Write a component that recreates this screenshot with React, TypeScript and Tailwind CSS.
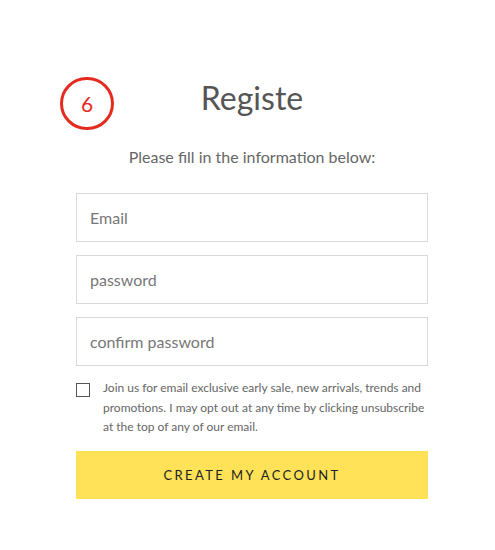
import React, { useState } from 'react';

const App: React.FC = () => {
  const [email, setEmail] = useState('');
  const [password, setPassword] = useState('');
  const [confirm, setConfirm] = useState('');
  const [subscribe, setSubscribe] = useState(false);

  return (
    <div className="min-h-[550px] w-full bg-white font-['Lato',sans-serif]">
      <div className="relative ml-[76px] w-[352px] pt-[76px]">
        {/* step marker */}
        <div className="absolute left-[-16px] top-[77px] flex h-[53px] w-[54px] items-center justify-center rounded-full border-[3px] border-[#e42b1f] text-[21px] text-[#e42b1f]">
          6
        </div>

        <h1 className="text-center text-[32px] leading-[44px] font-normal text-[#555555]">Registe</h1>
        <p className="mt-[26px] text-center text-[16px] leading-[22px] text-[#666666]">
          Please fill in the information below:
        </p>

        <form className="mt-[25px] flex flex-col" onSubmit={(e) => e.preventDefault()}>
          <div className="flex flex-col gap-[13px]">
            <input
              type="email"
              value={email}
              onChange={(e) => setEmail(e.target.value)}
              placeholder="Email"
              className="h-[49px] w-full border border-[#d9d9d9] px-[13px] text-[16px] text-[#555] placeholder-[#777777] outline-none"
            />
            <input
              type="password"
              value={password}
              onChange={(e) => setPassword(e.target.value)}
              placeholder="password"
              className="h-[49px] w-full border border-[#d9d9d9] px-[13px] text-[16px] text-[#555] placeholder-[#777777] outline-none"
            />
            <input
              type="password"
              value={confirm}
              onChange={(e) => setConfirm(e.target.value)}
              placeholder="confirm password"
              className="h-[49px] w-full border border-[#d9d9d9] px-[13px] text-[16px] text-[#555] placeholder-[#777777] outline-none"
            />
          </div>

          <label className="mt-[12px] flex items-start gap-[13px]">
            <input
              type="checkbox"
              checked={subscribe}
              onChange={(e) => setSubscribe(e.target.checked)}
              className="mt-[5px] h-[14px] w-[14px] shrink-0 appearance-none border border-[#555] bg-white checked:bg-[#555]"
            />
            <span className="text-[12px] leading-[19.5px] text-[#666666]">
              Join us for email exclusive early sale, new arrivals, trends and promotions. I may opt out at any time by clicking unsubscribe at the top of any of our email.
            </span>
          </label>

          <button
            type="submit"
            className="mt-[14px] h-[48px] w-full bg-[#ffe258] pt-[2px] text-[13px] font-normal tracking-[2.4px] text-[#222222]"
          >
            CREATE MY ACCOUNT
          </button>
        </form>
      </div>
    </div>
  );
};

export default App;
